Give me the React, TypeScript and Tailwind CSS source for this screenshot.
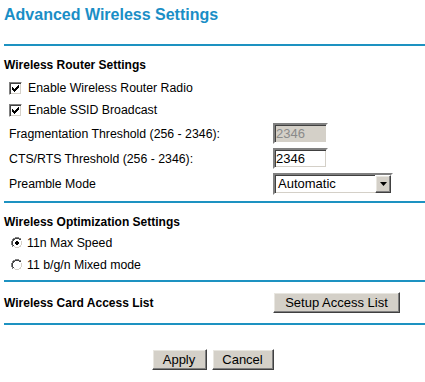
import React from 'react';

const Rule: React.FC = () => <div className="h-[2px] w-full bg-[#1d92c1]" />;

const CheckBox: React.FC = () => (
  <span className="box-border flex h-[13px] w-[13px] shrink-0 items-center justify-center border border-t-[#808080] border-l-[#808080] border-r-white border-b-white bg-white shadow-[inset_1px_1px_0_#404040,inset_-1px_-1px_0_#d4d0c8]">
    <svg width="7" height="7" viewBox="0 0 7 7">
      <path d="M0 2h1v1h1v1h1V3h1V2h1V1h1V0h1v3H6v1H5v1H4v1H3v1H2V6H1V5H0z" fill="#000" />
    </svg>
  </span>
);

const Radio: React.FC<{ on?: boolean }> = ({ on }) => (
  <svg width="12" height="12" viewBox="0 0 12 12" className="shrink-0">
    <path d="M4 0h4v1h2v1h1v2h1v4h-1v2h-1v1H8v1H4v-1H2v-1H1V8H0V4h1V2h1V1h2z" fill="#fff" />
    <path d="M4 0h4v1H4zM2 1h2v1H2zM8 1h2v1H8zM1 2h1v2H1zM0 4h1v4H0zM1 8h1v2H1z" fill="#808080" />
    <path d="M4 1h4v1H4zM2 2h2v1H2zM8 2h2v1H8zM2 3h1v1H2zM1 4h1v4H1zM2 8h1v1H2z" fill="#404040" />
    <path d="M10 2h1v2h-1zM11 4h1v4h-1zM10 8h1v2h-1zM8 10h2v1H8zM4 11h4v1H4zM2 10h2v1H2z" fill="#ffffff" />
    <path d="M10 4h1v4h-1zM9 8h1v2H9zM8 9h1v1H8zM4 10h4v1H4zM3 9h1v1H3z" fill="#d4d0c8" />
    {on && <path d="M5 4h2v1h1v2H7v1H5V7H4V5h1z" fill="#000" />}
  </svg>
);

const Sunken = 'box-border border-2 border-t-[#808080] border-l-[#808080] border-r-white border-b-white shadow-[inset_1px_1px_0_#404040,inset_-1px_-1px_0_#d4d0c8]';
const Raised = 'box-border border border-t-white border-l-white border-r-[#404040] border-b-[#404040] bg-[#d4d0c8] shadow-[inset_-1px_-1px_0_#808080,inset_1px_1px_0_#e8e6e0]';

const Button: React.FC<{ label: string; w: string }> = ({ label, w }) => (
  <button className={`${Raised} ${w} flex h-[21px] items-center justify-center text-[13px] text-black`}>
    {label}
  </button>
);

const FieldRow: React.FC<{ label: string; children: React.ReactNode }> = ({ label, children }) => (
  <div className="flex h-[25px] items-center">
    <span className="w-[269px] pl-[5px]">{label}</span>
    {children}
  </div>
);

export default function App() {
  return (
    <div className="w-[425px] bg-white pl-[4px] font-['Liberation_Sans',Arial,sans-serif] text-[12.3px] leading-[14px] text-black">
      <h1 className="pt-[6px] text-[16px] font-bold leading-[18px] text-[#1a8ec6]">
        Advanced Wireless Settings
      </h1>
      <div className="mt-[20px]">
        <Rule />
      </div>

      <h2 className="mt-[12px] text-[12px] font-bold">Wireless Router Settings</h2>
      <div className="mt-[5px] flex flex-col">
        <label className="flex h-[22px] items-center gap-[6px] pl-[5px]">
          <CheckBox />
          <span>Enable Wireless Router Radio</span>
        </label>
        <label className="flex h-[22px] items-center gap-[6px] pl-[5px]">
          <CheckBox />
          <span>Enable SSID Broadcast</span>
        </label>
        <FieldRow label="Fragmentation Threshold (256 - 2346):">
          <div className={`${Sunken} flex h-[21px] w-[55px] items-center bg-[#d4d0c8] pl-[1px] text-[13px] text-[#8a8a8a]`}>
            2346
          </div>
        </FieldRow>
        <FieldRow label="CTS/RTS Threshold (256 - 2346):">
          <div className={`${Sunken} flex h-[21px] w-[55px] items-center bg-white pl-[1px] text-[13px]`}>
            2346
          </div>
        </FieldRow>
        <FieldRow label="Preamble Mode">
          <div className={`${Sunken} flex h-[22px] w-[120px] items-center justify-between bg-white pl-[3px] text-[13px]`}>
            <span>Automatic</span>
            <span className={`${Raised} flex h-[18px] w-[16px] items-center justify-center`}>
              <svg width="7" height="4" viewBox="0 0 7 4">
                <path d="M0 0h7L3.5 4z" fill="#000" />
              </svg>
            </span>
          </div>
        </FieldRow>
      </div>
      <div className="mt-[5px]">
        <Rule />
      </div>

      <h2 className="mt-[12px] text-[12px] font-bold">Wireless Optimization Settings</h2>
      <div className="mt-[3px] flex flex-col">
        <label className="flex h-[22px] items-center gap-[4px] pl-[7px]">
          <Radio on />
          <span>11n Max Speed</span>
        </label>
        <label className="flex h-[22px] items-center gap-[4px] pl-[7px]">
          <Radio />
          <span>11 b/g/n Mixed mode</span>
        </label>
      </div>
      <div className="mt-[4px]">
        <Rule />
      </div>

      <div className="flex h-[41px] items-center">
        <span className="w-[269px] text-[12px] font-bold">Wireless Card Access List</span>
        <Button label="Setup Access List" w="w-[127px]" />
      </div>
      <Rule />

      <div className="mt-[24px] flex justify-center gap-[5px] pr-[4px]">
        <Button label="Apply" w="w-[55px]" />
        <Button label="Cancel" w="w-[62px]" />
      </div>
      <div className="h-[13px]" />
    </div>
  );
}
